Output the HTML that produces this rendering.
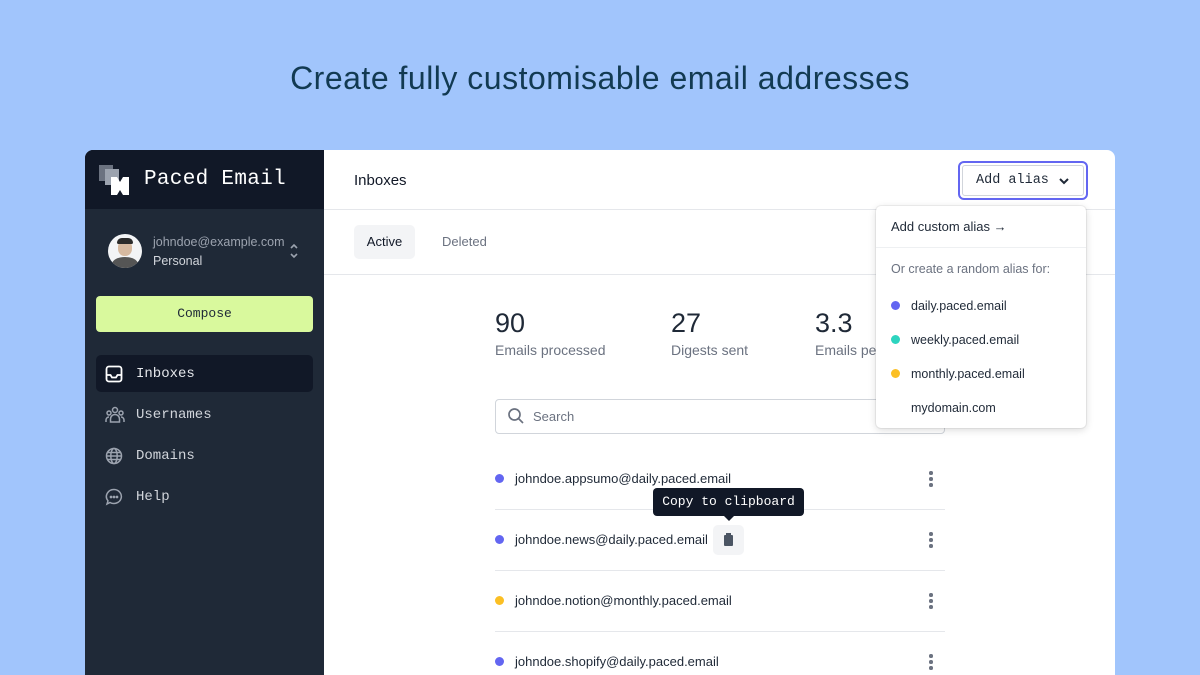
<!DOCTYPE html>
<html><head><meta charset="utf-8"><style>
*{box-sizing:border-box;margin:0;padding:0}
html,body{width:1200px;height:675px;overflow:hidden}
body{background:#a1c5fc;font-family:"Liberation Sans",sans-serif;position:relative}
.mono{font-family:"Liberation Mono",monospace}
h1{position:absolute;top:60px;left:0;width:1200px;text-align:center;font-weight:400;font-size:32px;color:#123a52;letter-spacing:0.5px}
.card{position:absolute;left:85px;top:150px;width:1030px;height:525px;background:#fff;border-radius:8px 8px 0 0;overflow:hidden}
.side{position:absolute;left:0;top:0;width:239px;height:100%;background:#1f2937}
.shead{height:59px;background:#111827;position:relative}
.abs{position:absolute}
.nav{position:absolute;left:11px;width:217px;height:37px;border-radius:5px;color:#e5e7eb;font-size:14px;display:flex;align-items:center}
.nav svg{margin-left:9px;margin-right:13px}
.dot{position:absolute;width:9px;height:9px;border-radius:50%}
.row{position:absolute;left:410px;width:450px;height:61px;border-bottom:1px solid #e5e7eb}
.row span{position:absolute;left:20px;top:22px;font-size:13px;color:#1f2937}
.kebab{position:absolute;right:12px;top:22px;width:4px}
.kebab i{display:block;width:3.5px;height:3.5px;border-radius:50%;background:#6b7280;margin-bottom:2.5px}
</style></head><body>
<h1>Create fully customisable email addresses</h1>
<div class="card">
 <div class="side">
  <div class="shead">
   <svg class="abs" style="left:14px;top:15px" width="32" height="30" viewBox="0 0 32 30"><rect x="0" y="0" width="14" height="16" fill="#6b7280"/><rect x="6" y="4" width="14" height="16" fill="#9ca3af"/><path d="M12 12h6l3 5 3-5h6v18h-6l-3-5-3 5h-6z" fill="#fff"/></svg>
   <div class="abs mono" style="left:59px;top:18px;color:#fff;font-size:21px;letter-spacing:0.3px">Paced Email</div>
  </div>
  <div class="abs" style="left:23px;top:84px;width:34px;height:34px;border-radius:50%;background:#f3f4f6;overflow:hidden"><div style="position:absolute;left:10px;top:6px;width:14px;height:16px;border-radius:45%;background:#d6b9a0"></div><div style="position:absolute;left:9px;top:4px;width:16px;height:6px;border-radius:8px 8px 2px 2px;background:#2b2b2b"></div><div style="position:absolute;left:4px;top:23px;width:26px;height:14px;border-radius:50% 50% 0 0;background:#555"></div></div>
  <div class="abs" style="left:68px;top:85px;color:#9ca3af;font-size:12.5px">johndoe@example.com</div>
  <div class="abs" style="left:68px;top:104px;color:#d1d5db;font-size:12.5px">Personal</div>
  <svg class="abs" style="left:204px;top:92px" width="10" height="18" viewBox="0 0 10 18" fill="none" stroke="#9ca3af" stroke-width="1.6"><path d="M2 6l3-3 3 3M2 12l3 3 3-3"/></svg>
  <div class="abs mono" style="left:11px;top:146px;width:217px;height:36px;background:#d9f99d;border-radius:4px;text-align:center;line-height:36px;font-size:13px;color:#1f2937">Compose</div>
  <div class="nav mono" style="top:205px;background:#111827"><svg width="18" height="18" viewBox="0 0 18 18" fill="none" stroke="#fff" stroke-width="1.8"><rect x="1.5" y="1.5" width="15" height="15" rx="2.5"/><path d="M1.5 10h4l1.5 2.5h4l1.5-2.5h4"/></svg>Inboxes</div>
  <div class="nav mono" style="top:246px;color:#d1d5db"><svg width="20" height="18" viewBox="0 0 20 18" fill="none" stroke="#9ca3af" stroke-width="1.5" style="margin-right:11px"><circle cx="10" cy="4" r="2.5"/><circle cx="4" cy="7" r="2"/><circle cx="16" cy="7" r="2"/><path d="M5.5 16v-3a4.5 4.5 0 019 0v3zM1 16v-2a3 3 0 013-3M19 16v-2a3 3 0 00-3-3"/></svg>Usernames</div>
  <div class="nav mono" style="top:287px;color:#d1d5db"><svg width="18" height="18" viewBox="0 0 18 18" fill="none" stroke="#9ca3af" stroke-width="1.5"><circle cx="9" cy="9" r="7.5"/><ellipse cx="9" cy="9" rx="3.2" ry="7.5"/><path d="M1.5 9h15M2.5 5.5h13M2.5 12.5h13"/></svg>Domains</div>
  <div class="nav mono" style="top:328px;color:#d1d5db"><svg width="18" height="18" viewBox="0 0 18 18" fill="none" stroke="#9ca3af" stroke-width="1.5"><path d="M9 1.5a7.5 7 0 11-4 13l-3 1.5 1-3.2A7.5 7 0 019 1.5z"/><circle cx="6" cy="9" r=".6" fill="#9ca3af"/><circle cx="9" cy="9" r=".6" fill="#9ca3af"/><circle cx="12" cy="9" r=".6" fill="#9ca3af"/></svg>Help</div>
 </div>
 <div class="abs" style="left:239px;top:0;right:0;height:60px;border-bottom:1px solid #e5e7eb"></div>
 <div class="abs" style="left:269px;top:22px;font-size:15px;color:#111827">Inboxes</div>
 <div class="abs" style="left:239px;top:124px;right:0;height:1px;background:#e5e7eb"></div>
 <div class="abs" style="left:269px;top:75px;width:61px;height:34px;background:#f3f4f6;border-radius:5px;text-align:center;line-height:34px;font-size:13px;color:#111827">Active</div>
 <div class="abs" style="left:357px;top:84px;font-size:13px;color:#6b7280">Deleted</div>
 <div class="abs" style="left:410px;top:158px;font-size:27px;color:#1f2937">90</div>
 <div class="abs" style="left:410px;top:192px;font-size:14px;color:#6b7280">Emails processed</div>
 <div class="abs" style="left:586px;top:158px;font-size:27px;color:#1f2937">27</div>
 <div class="abs" style="left:586px;top:192px;font-size:14px;color:#6b7280">Digests sent</div>
 <div class="abs" style="left:730px;top:158px;font-size:27px;color:#1f2937">3.3</div>
 <div class="abs" style="left:730px;top:192px;font-size:14px;color:#6b7280">Emails per digest</div>
 <div class="abs" style="left:410px;top:249px;width:450px;height:35px;border:1px solid #d1d5db;border-radius:4px"></div>
 <svg class="abs" style="left:422px;top:257px" width="18" height="18" viewBox="0 0 18 18" fill="none" stroke="#6b7280" stroke-width="1.7"><circle cx="7.5" cy="7.5" r="5.5"/><path d="M11.5 11.5l4.5 4.5"/></svg>
 <div class="abs" style="left:448px;top:259px;font-size:13px;color:#6b7280">Search</div>
 <div class="row" style="top:299px"><div class="dot" style="left:0;top:25px;background:#6366f1"></div><span>johndoe.appsumo@daily.paced.email</span><div class="kebab"><i></i><i></i><i></i></div></div>
 <div class="row" style="top:360px"><div class="dot" style="left:0;top:25px;background:#6366f1"></div><span>johndoe.news@daily.paced.email</span><div class="kebab"><i></i><i></i><i></i></div>
  <div class="abs" style="left:218px;top:15px;width:31px;height:30px;background:#f3f4f6;border-radius:5px"><div style="position:absolute;left:11px;top:10px;width:9px;height:11px;background:#4b5563;border-radius:1px"></div><div style="position:absolute;left:13px;top:8px;width:5px;height:3px;background:#4b5563"></div></div></div>
 <div class="row" style="top:421px"><div class="dot" style="left:0;top:25px;background:#fbbf24"></div><span>johndoe.notion@monthly.paced.email</span><div class="kebab"><i></i><i></i><i></i></div></div>
 <div class="row" style="top:482px"><div class="dot" style="left:0;top:25px;background:#6366f1"></div><span>johndoe.shopify@daily.paced.email</span><div class="kebab"><i></i><i></i><i></i></div></div>
 <div class="abs mono" style="left:568px;top:338px;width:151px;height:28px;background:#111827;color:#fff;border-radius:4px;font-size:13px;text-align:center;line-height:28px">Copy to clipboard</div>
 <div class="abs" style="left:638px;top:365px;width:0;height:0;border-left:6px solid transparent;border-right:6px solid transparent;border-top:6px solid #111827"></div>
 <div class="abs" style="left:873px;top:11px;width:130px;height:39px;border:2px solid #6366f1;border-radius:6px"><div style="position:absolute;inset:2px;border:1px solid #d1d5db;border-radius:3px"></div></div>
 <div class="abs mono" style="left:891px;top:23px;font-size:13.5px;color:#1f2937">Add alias</div>
 <svg class="abs" style="left:973px;top:26px" width="12" height="10" viewBox="0 0 12 10" fill="none" stroke="#1f2937" stroke-width="2"><path d="M2 3l4 4 4-4"/></svg>
 <div class="abs" style="left:791px;top:56px;width:210px;height:222px;background:#fff;border-radius:5px;box-shadow:0 2px 8px rgba(0,0,0,.15),0 0 0 1px rgba(0,0,0,.05)">
  <div class="abs" style="left:15px;top:13px;font-size:13px;color:#1f2937">Add custom alias →</div>
  <div class="abs" style="left:0;top:41px;width:100%;height:1px;background:#eef0f2"></div>
  <div class="abs" style="left:15px;top:56px;font-size:12.5px;color:#6b7280">Or create a random alias for:</div>
  <div class="dot" style="left:15px;top:95px;background:#6366f1"></div><div class="abs" style="left:35px;top:93px;font-size:12.5px;color:#1f2937">daily.paced.email</div>
  <div class="dot" style="left:15px;top:129px;background:#2dd4bf"></div><div class="abs" style="left:35px;top:127px;font-size:12.5px;color:#1f2937">weekly.paced.email</div>
  <div class="dot" style="left:15px;top:163px;background:#fbbf24"></div><div class="abs" style="left:35px;top:161px;font-size:12.5px;color:#1f2937">monthly.paced.email</div>
  <div class="abs" style="left:35px;top:195px;font-size:12.5px;color:#1f2937">mydomain.com</div>
 </div>
</div>
</body></html>
